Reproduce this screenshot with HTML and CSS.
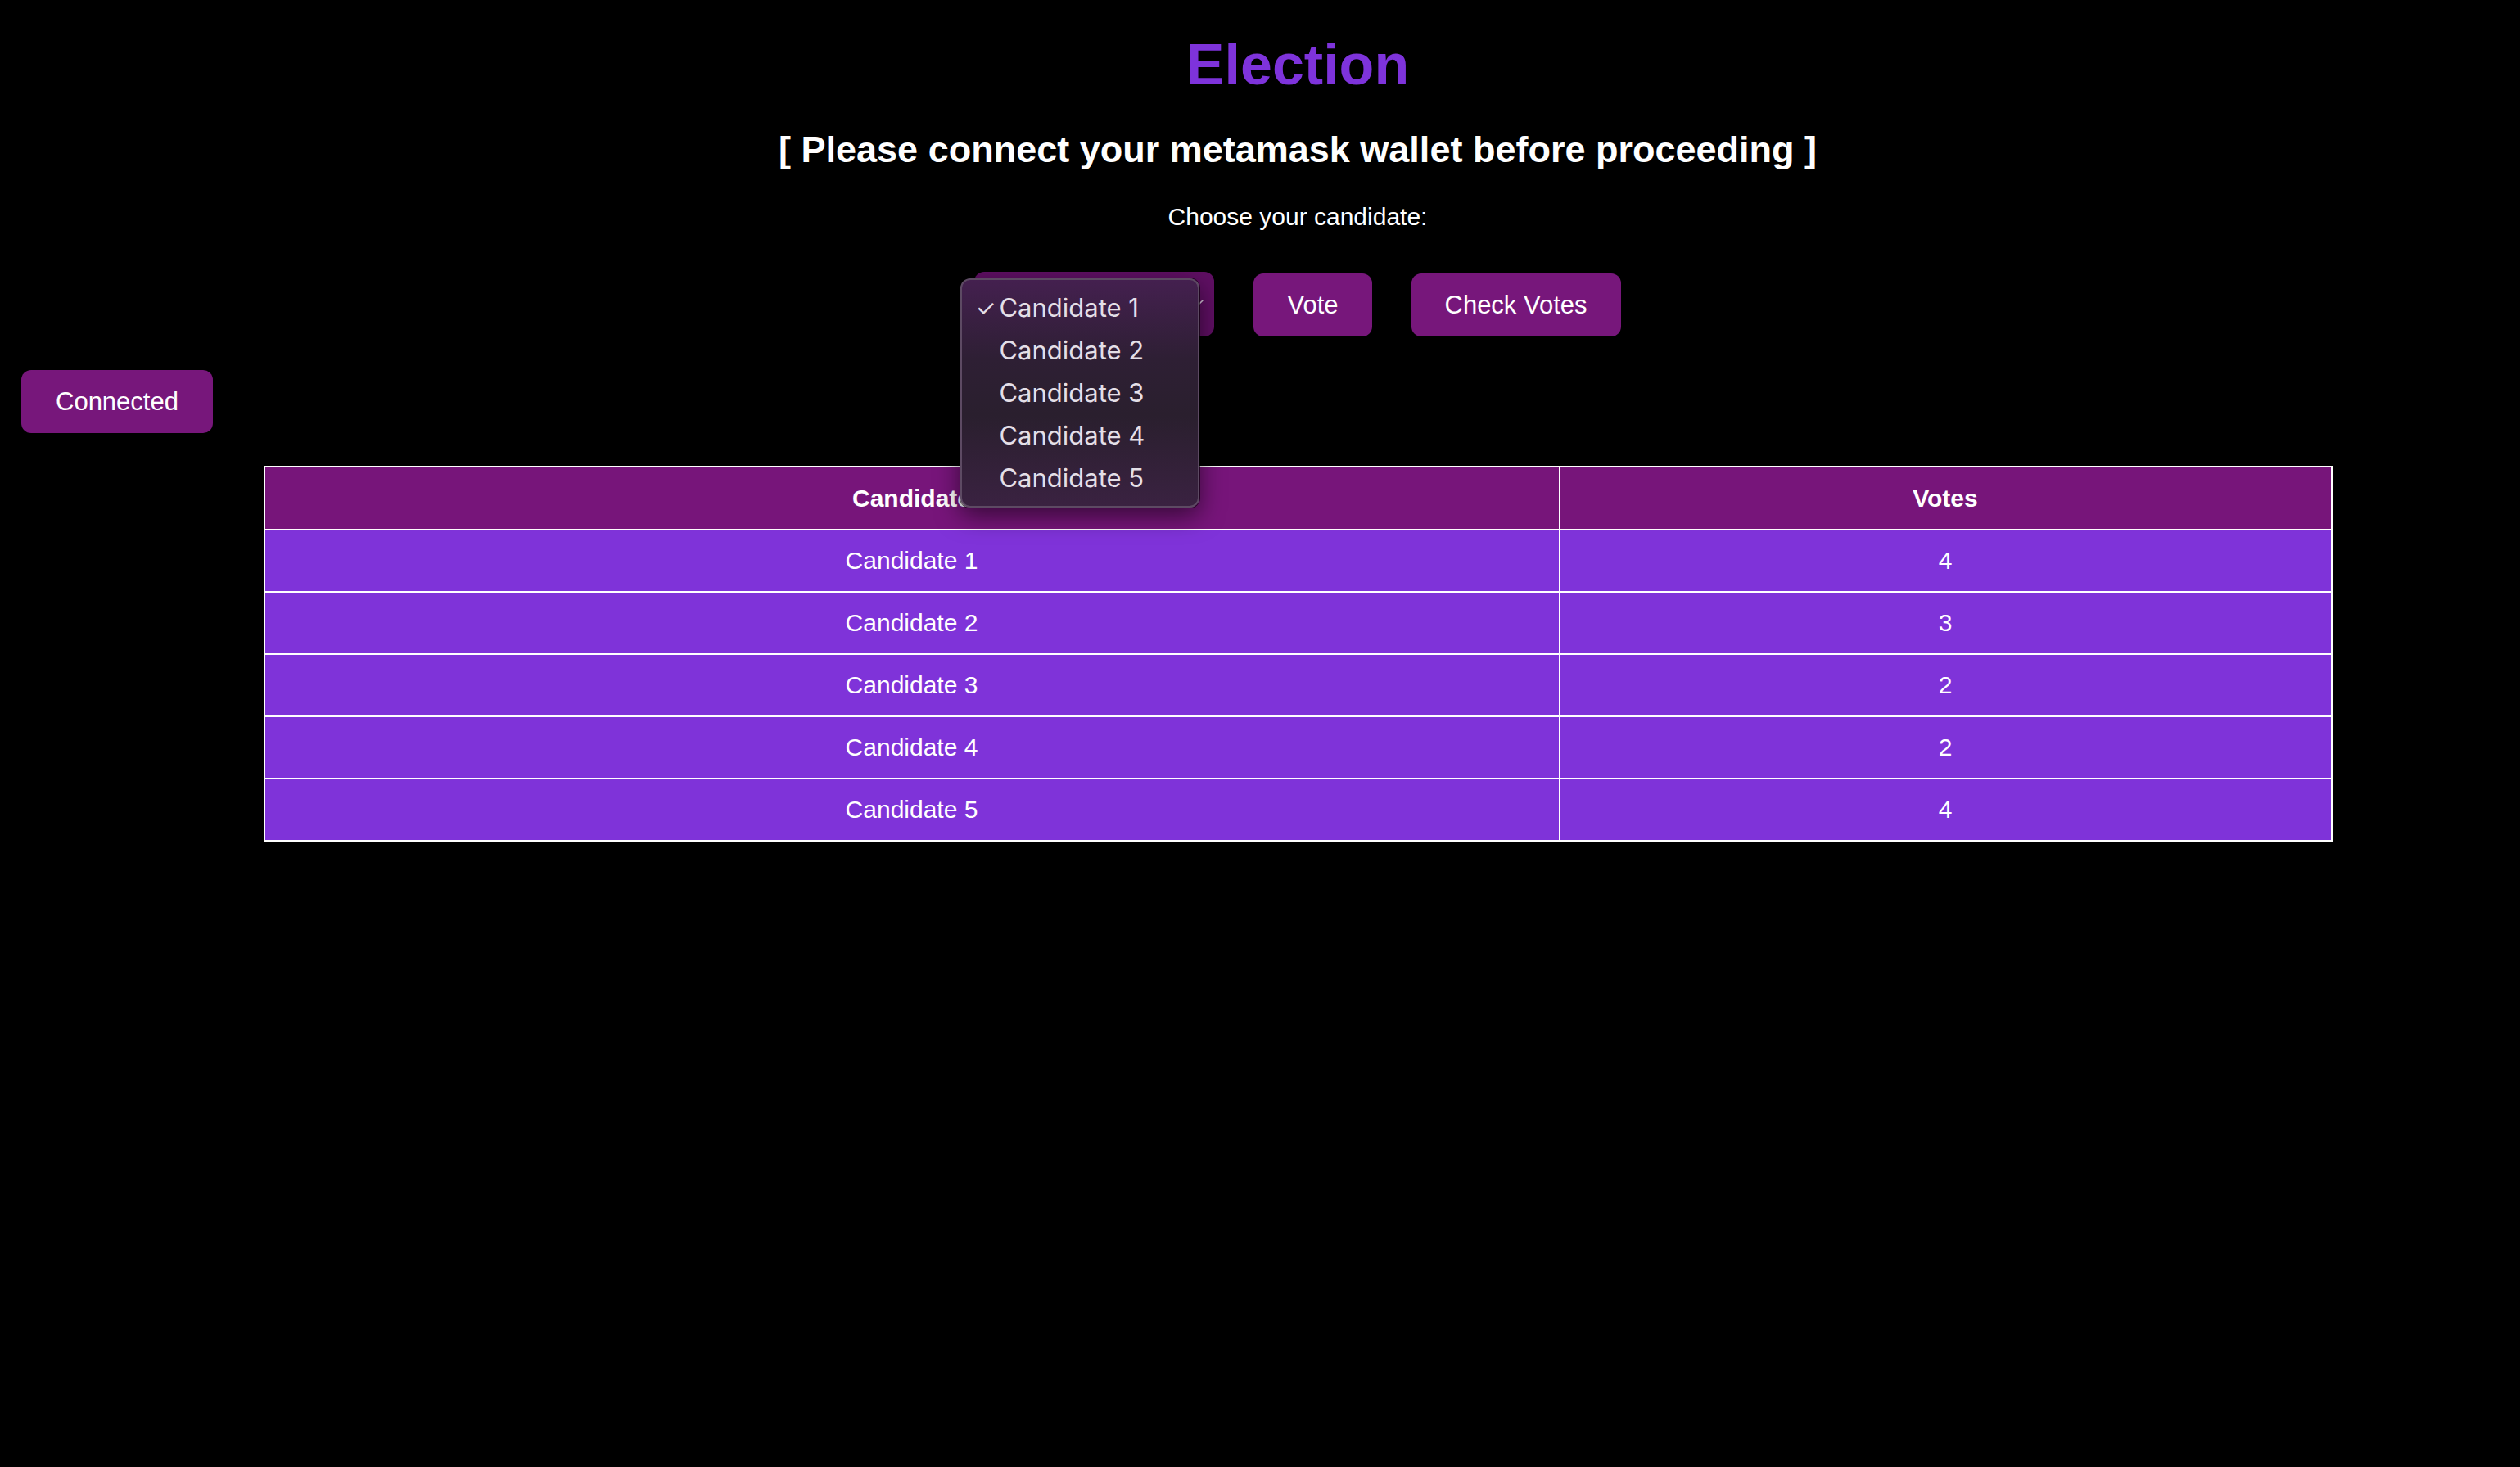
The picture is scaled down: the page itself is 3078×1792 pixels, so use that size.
FILE: index.html
```html
<!DOCTYPE html>
<html lang="en">
<head>
<meta charset="utf-8">
<title>Election</title>
<link rel="stylesheet" href="styles.css">
</head>
<body>
<main class="page">
  <header class="intro">
    <h1 class="title">Election</h1>
    <h2 class="notice">[ Please connect your metamask wallet before proceeding ]</h2>
    <p class="prompt">Choose your candidate:</p>
    <div class="controls">
      <div class="picker">
        <div class="select">
          <span class="select-label">Candidate 1</span>
          <svg class="chevron" width="14" height="10" viewBox="0 0 14 10"><path d="M2 2 L7 7 L12 2" fill="none" stroke="#d9c9dd" stroke-width="1.6" stroke-linecap="round" stroke-linejoin="round"/></svg>
        </div>
        <ul class="menu">
          <li class="menu-item selected"><span class="check">✓</span>Candidate 1</li>
          <li class="menu-item"><span class="check"></span>Candidate 2</li>
          <li class="menu-item"><span class="check"></span>Candidate 3</li>
          <li class="menu-item"><span class="check"></span>Candidate 4</li>
          <li class="menu-item"><span class="check"></span>Candidate 5</li>
        </ul>
      </div>
      <button class="btn vote">Vote</button>
      <button class="btn">Check Votes</button>
    </div>
  </header>
  <div class="wallet">
    <button class="btn connected">Connected</button>
  </div>
  <section class="results">
    <table class="tally">
      <colgroup><col class="col-name"><col class="col-votes"></colgroup>
      <thead>
        <tr><th>Candidate</th><th>Votes</th></tr>
      </thead>
      <tbody>
        <tr><td>Candidate 1</td><td>4</td></tr>
        <tr><td>Candidate 2</td><td>3</td></tr>
        <tr><td>Candidate 3</td><td>2</td></tr>
        <tr><td>Candidate 4</td><td>2</td></tr>
        <tr><td>Candidate 5</td><td>4</td></tr>
      </tbody>
    </table>
  </section>
</main>
</body>
</html>
```
FILE: styles.css
```css
* { box-sizing: border-box; }
html, body { margin: 0; padding: 0; background: #000; }
body {
  font-family: "Liberation Sans", Arial, Helvetica, sans-serif;
  color: #fff;
  font-size: 30px;
  min-height: 1792px;
}
.page { display: flex; flex-direction: column; }
.intro {
  padding-left: 92px;
  display: flex;
  flex-direction: column;
  align-items: center;
}
.title {
  margin: 39px 0 0;
  font-size: 70px;
  line-height: 80px;
  font-weight: 700;
  color: #7e33db;
}
.notice {
  margin: 38px 0 0;
  font-size: 45px;
  line-height: 52px;
  font-weight: 700;
  color: #fff;
}
.prompt {
  margin: 39px 0 0;
  font-size: 30px;
  line-height: 34px;
}
.controls {
  margin-top: 50px;
  display: flex;
  align-items: flex-end;
  gap: 48px;
}
.picker { position: relative; }
.select {
  width: 293px;
  height: 79px;
  background: #5f0f63;
  border-radius: 12px;
  display: flex;
  align-items: center;
  justify-content: space-between;
  padding: 0 12px 0 30px;
  font-family: Inter, "Liberation Sans", sans-serif;
  font-size: 30px;
  color: #fff;
}
.select-label { visibility: hidden; }
.chevron { margin-top: -4px; }
.menu {
  position: absolute;
  left: -17px;
  top: 8px;
  width: 292px;
  height: 280px;
  margin: 0;
  padding: 8px 0 0;
  list-style: none;
  border-radius: 12px;
  border: 2px solid #5d4a63;
  background: linear-gradient(180deg, #44204f 0%, #2e1f34 35%, #2a1f2e 60%, #3a2241 100%);
  box-shadow: 0 10px 30px rgba(0,0,0,0.55), 0 0 0 1px rgba(0,0,0,0.6);
  font-family: Inter, "Liberation Sans", sans-serif;
  font-size: 31px;
  color: #e4dfe7;
  z-index: 5;
}
.menu-item {
  display: flex;
  align-items: center;
  height: 52px;
  line-height: 52px;
}
.check {
  width: 45px;
  padding-left: 16px;
  font-size: 28px;
}
.btn {
  font-family: "Liberation Sans", Arial, sans-serif;
  font-size: 31px;
  color: #fff;
  background: #77177b;
  border: none;
  border-radius: 12px;
  height: 77px;
  padding: 0 41px;
  line-height: 34px;
}
.wallet {
  margin-top: 41px;
  padding-left: 26px;
  display: flex;
}
.connected { padding: 0 42px; }
.results {
  margin-top: 40px;
  padding-left: 92px;
  display: flex;
  justify-content: center;
}
.tally {
  width: 2525px;
  border-collapse: collapse;
  table-layout: fixed;
  font-size: 30px;
}
.col-name { width: 1582px; }
.col-votes { width: 943px; }
.tally th, .tally td {
  border: 2px solid #fff;
  text-align: center;
  padding: 0;
  line-height: 34px;
}
.tally th {
  height: 77px;
  background: #77157a;
  font-weight: 700;
}
.tally td {
  height: 76px;
  background: #7f33d9;
}
```
